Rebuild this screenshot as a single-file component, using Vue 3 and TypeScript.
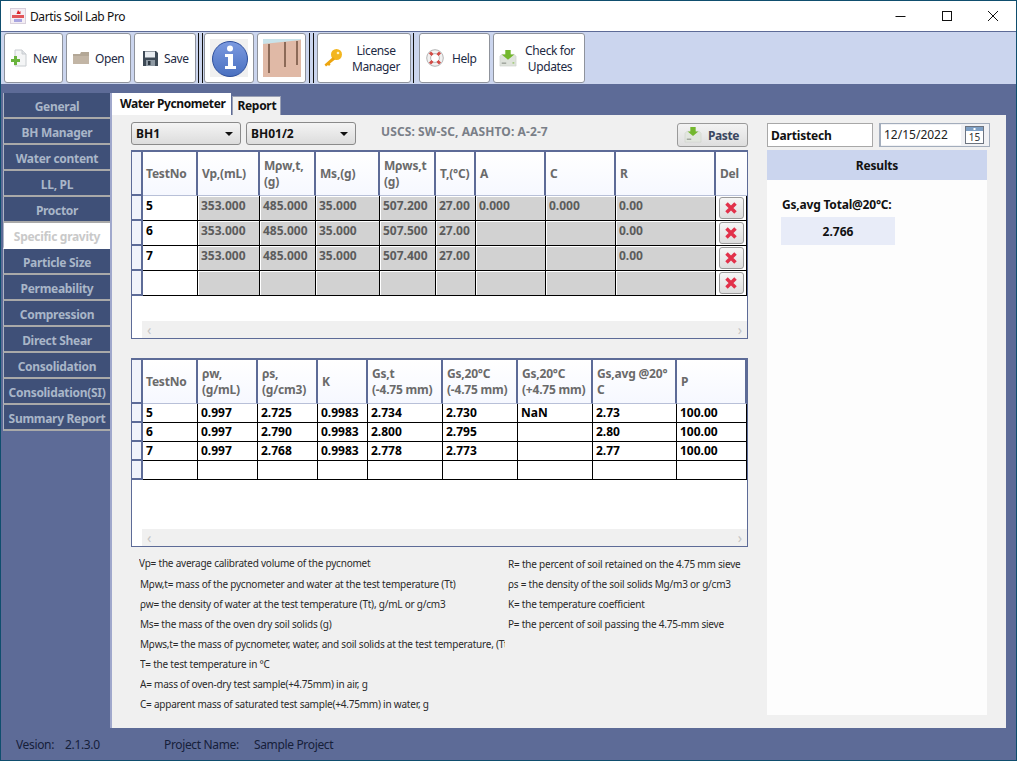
<script setup lang="ts">
const navItems = [
  'General', 'BH Manager', 'Water content', 'LL, PL', 'Proctor', 'Specific gravity', 'Particle Size',
  'Permeability', 'Compression', 'Direct Shear', 'Consolidation', 'Consolidation(SI)', 'Summary Report',
];

const inputCols = [55, 62, 56, 64, 56, 40, 70, 70, 100];
const inputHead = ['TestNo', 'Vp,(mL)', 'Mρw,t,\n(g)', 'Ms,(g)', 'Mρws,t\n(g)', 'T,(°C)', 'A', 'C', 'R'];
const inputRows = [
  ['5', '353.000', '485.000', '35.000', '507.200', '27.00', '0.000', '0.000', '0.00'],
  ['6', '353.000', '485.000', '35.000', '507.500', '27.00', '', '', '0.00'],
  ['7', '353.000', '485.000', '35.000', '507.400', '27.00', '', '', '0.00'],
  ['', '', '', '', '', '', '', '', ''],
];

const resultCols = [55, 60, 60, 50, 75, 75, 75, 84, 70];
const resultHead = ['TestNo', 'ρw,\n(g/mL)', 'ρs,\n(g/cm3)', 'K', 'Gs,t\n(-4.75 mm)', 'Gs,20°C\n(-4.75 mm)', 'Gs,20°C\n(+4.75 mm)', 'Gs,avg @20°\nC', 'P'];
const resultRows = [
  ['5', '0.997', '2.725', '0.9983', '2.734', '2.730', 'NaN', '2.73', '100.00'],
  ['6', '0.997', '2.790', '0.9983', '2.800', '2.795', '', '2.80', '100.00'],
  ['7', '0.997', '2.768', '0.9983', '2.778', '2.773', '', '2.77', '100.00'],
  ['', '', '', '', '', '', '', '', ''],
];

const notesLeft = [
  { text: 'Vp= the average calibrated volume of the pycnometer', width: 232 },
  { text: 'Mρw,t= mass of the pycnometer and water at the test temperature (Tt)', width: 365 },
  { text: 'ρw= the density of water at the test temperature (Tt), g/mL or g/cm3', width: 365 },
  { text: 'Ms= the mass of the oven dry soil solids (g)', width: 365 },
  { text: 'Mρws,t= the mass of pycnometer, water, and soil solids at the test temperature, (Tt)', width: 365 },
  { text: 'T= the test temperature in °C', width: 365 },
  { text: 'A= mass of oven-dry test sample(+4.75mm) in air, g', width: 365 },
  { text: 'C= apparent mass of saturated test sample(+4.75mm) in water, g', width: 365 },
];

const notesRight = [
  'R= the percent of soil retained on the 4.75 mm sieve',
  'ρs = the density of the soil solids Mg/m3 or g/cm3',
  'K= the temperature coefficient',
  'P= the percent of soil passing the 4.75-mm sieve',
];

const colTemplate = (cols: number[], extra = '') =>
  ({ gridTemplateColumns: `11px ${cols.map((c) => c + 'px').join(' ')} ${extra}` });
</script>

<template>
  <div class="window">
    <header class="titlebar">
      <svg class="app-icon" viewBox="0 0 16 16">
        <rect x="0.5" y="0.5" width="15" height="15" fill="#f4eef4" stroke="#d8d0dc" />
        <path d="M6.5 6 L8 2 L9.5 4 L10.5 3 L10.5 6 Z" fill="#d9262c" />
        <rect x="2" y="7" width="12" height="3" fill="#e2555a" />
        <rect x="4" y="11" width="8" height="3" fill="#a9a6e0" />
      </svg>
      <span class="app-title">Dartis Soil Lab Pro</span>
      <div class="win-controls">
        <svg viewBox="0 0 12 12"><path d="M0.5 6.5H10.5" stroke="#111" fill="none" /></svg>
        <svg viewBox="0 0 12 12"><rect x="1.5" y="1.5" width="9" height="9" stroke="#111" fill="none" /></svg>
        <svg viewBox="0 0 12 12"><path d="M1 1L11 11M11 1L1 11" stroke="#111" fill="none" /></svg>
      </div>
    </header>

    <div class="toolbar">
      <button class="tool new-btn">
        <svg viewBox="0 0 18 18" class="tool-icon">
          <path d="M5 1H12L16 5V17H5Z" fill="#f4f5f6" stroke="#c8ccd0" />
          <path d="M12 1V5H16" fill="#dfe2e6" stroke="#c8ccd0" />
          <path d="M4 7V10H1V13H4V16H7V13H10V10H7V7Z" fill="#69b33c" />
        </svg>
        <span>New</span>
      </button>
      <button class="tool open-btn">
        <svg viewBox="0 0 18 18" class="tool-icon">
          <path d="M1 5V15H17V3H9L8 5Z" fill="#b3a796" />
          <path d="M1 7H17V15H1Z" fill="#c2b5a5" />
        </svg>
        <span>Open</span>
      </button>
      <button class="tool save-btn">
        <svg viewBox="0 0 18 18" class="tool-icon">
          <path d="M2 2H15L17 4V17H2Z" fill="#3e4a56" />
          <rect x="4" y="2.500" width="10" height="6" fill="#e9edf1" />
          <rect x="5" y="11" width="9" height="6" fill="#8f9aa4" />
          <rect x="7" y="12" width="2.500" height="4" fill="#2e3842" />
        </svg>
        <span>Save</span>
      </button>
      <i class="tool-sep sep-a"></i>
      <button class="tool info-btn">
        <svg viewBox="0 0 38 38" class="pic-icon">
          <rect width="38" height="38" fill="#f0f0f0" />
          <defs>
            <linearGradient id="infoFill" x1="0" y1="0" x2="0" y2="1">
              <stop offset="0" stop-color="#7c9ae0" />
              <stop offset="1" stop-color="#4a70c0" />
            </linearGradient>
          </defs>
          <circle cx="20" cy="20" r="17.500" fill="url(#infoFill)" stroke="#2e4f9c" />
          <circle cx="20" cy="9.500" r="3" fill="#fff" />
          <path d="M15 15H23V27H26V30H15V27H18V18H15Z" fill="#fff" />
        </svg>
      </button>
      <button class="tool map-btn">
        <svg viewBox="0 0 38 38" class="pic-icon">
          <rect width="38" height="38" fill="#e0b9a6" />
          <path d="M0 0H38V1L0 5Z" fill="#c9e3ea" />
          <rect x="5" y="5" width="2" height="29" fill="#8c6a58" />
          <rect x="21" y="3" width="2" height="25" fill="#8c6a58" />
          <rect x="33" y="2" width="2" height="24" fill="#8c6a58" />
        </svg>
      </button>
      <i class="tool-sep sep-b"></i>
      <button class="tool license-btn">
        <svg viewBox="0 0 20 20" class="tool-icon key-icon">
          <circle cx="13.500" cy="6.500" r="5.500" fill="#f3b61f" />
          <circle cx="15" cy="5" r="1.300" fill="#fff4c8" />
          <path d="M10 9L1.500 16.500L3 18.500L5 17L6 18L7.500 16.500L7 15.500L12 11.500Z" fill="#eda50f" />
        </svg>
        <span class="two-line">License<br />Manager</span>
      </button>
      <i class="tool-sep single"></i>
      <button class="tool help-btn">
        <svg viewBox="0 0 18 18" class="tool-icon">
          <circle cx="9" cy="9" r="6.500" fill="none" stroke="#f1f1f1" stroke-width="4" />
          <circle cx="9" cy="9" r="8.300" fill="none" stroke="#8a8a8a" stroke-width="0.600" />
          <circle cx="9" cy="9" r="4.400" fill="none" stroke="#8a8a8a" stroke-width="0.600" />
          <path d="M4 3.500L6.500 6M14 3.500L11.500 6M4 14.500L6.500 12M14 14.500L11.500 12" stroke="#d24a45" stroke-width="3" />
        </svg>
        <span>Help</span>
      </button>
      <button class="tool update-btn">
        <svg viewBox="0 0 20 20" class="tool-icon">
          <path d="M1 8L3 6H17L19 8V19H1Z" fill="#dfe3dc" stroke="#c5cac2" stroke-width="0.500" />
          <path d="M7 1H13V6H17L10 12L3 6H7Z" fill="#74b82e" />
          <rect x="3" y="15" width="5" height="1.500" fill="#9aa097" />
          <rect x="15" y="15" width="2" height="1" fill="#74b82e" />
        </svg>
        <span class="two-line">Check for<br />Updates</span>
      </button>
    </div>

    <div class="workspace">
      <nav class="sidenav">
        <div v-for="item in navItems" :key="item" class="nav-item" :class="{ active: item === 'Specific gravity' }">
          {{ item }}
        </div>
      </nav>

      <main class="main">
        <div class="tabs">
          <div class="tab active">Water Pycnometer</div>
          <div class="tab">Report</div>
        </div>

        <div class="panel">
          <section class="left">
            <div class="filters">
              <div class="combo"><span>BH1</span><i class="caret"></i></div>
              <div class="combo"><span>BH01/2</span><i class="caret"></i></div>
              <span class="uscs">USCS: SW-SC, AASHTO: A-2-7</span>
              <button class="paste">
                <svg viewBox="0 0 20 18" class="paste-icon">
                  <path d="M1 7L3 5H17L19 7V17H1Z" fill="#e2e6df" stroke="#c5cac2" stroke-width="0.500" />
                  <path d="M7 0H13V5H16L10 10L4 5H7Z" fill="#74b82e" />
                  <rect x="3" y="13" width="5" height="1.500" fill="#9aa097" />
                </svg>
                <span>Paste</span>
              </button>
            </div>

            <div class="grid-box input-box">
              <div class="grid-row head" :style="colTemplate(inputCols, '1fr')">
                <div class="sel"></div>
                <div v-for="h in inputHead" :key="h" class="hcell">{{ h }}</div>
                <div class="hcell last">Del</div>
              </div>
              <div v-for="(row, r) in inputRows" :key="r" class="grid-row body" :style="colTemplate(inputCols, '1fr')">
                <div class="sel"></div>
                <div v-for="(c, i) in row" :key="i" class="cell" :class="{ locked: i > 0 }">{{ c }}</div>
                <div class="cell del-cell">
                  <button class="del">
                    <svg viewBox="0 0 12 12"><path d="M1.500 1.500L10.500 10.500M10.500 1.500L1.500 10.500" stroke="#e2314a" stroke-width="3.500" /></svg>
                  </button>
                </div>
              </div>
              <div class="hscroll"><span>‹</span><span>›</span></div>
            </div>

            <div class="grid-box result-box">
              <div class="grid-row head" :style="colTemplate(resultCols)">
                <div class="sel"></div>
                <div v-for="h in resultHead" :key="h" class="hcell">{{ h }}</div>
              </div>
              <div v-for="(row, r) in resultRows" :key="r" class="grid-row body short" :style="colTemplate(resultCols)">
                <div class="sel"></div>
                <div v-for="(c, i) in row" :key="i" class="cell">{{ c }}</div>
              </div>
              <div class="hscroll"><span>‹</span><span>›</span></div>
            </div>

            <div class="notes">
              <div class="notes-col">
                <div v-for="n in notesLeft" :key="n.text" class="note" :style="{ width: n.width + 'px' }">{{ n.text }}</div>
              </div>
              <div class="notes-col right-notes">
                <div v-for="n in notesRight" :key="n" class="note">{{ n }}</div>
              </div>
            </div>
          </section>

          <aside class="right">
            <div class="meta">
              <div class="company">Dartistech</div>
              <div class="date">
                <span class="date-text">12/15/2022</span>
                <svg viewBox="0 0 19 18" class="cal">
                  <rect x="0.500" y="0.500" width="18" height="17" fill="#fff" stroke="#6d7480" />
                  <rect x="1" y="1" width="17" height="4" fill="#7d9fc4" />
                  <rect x="8.500" y="2" width="2" height="2" fill="#fff" />
                  <text x="9.500" y="15" text-anchor="middle" class="cal-day">15</text>
                </svg>
              </div>
            </div>
            <div class="results">
              <div class="results-head">Results</div>
              <div class="results-label">Gs,avg Total@20°C:</div>
              <div class="results-value">2.766</div>
            </div>
          </aside>
        </div>
      </main>
    </div>

    <footer class="status">
      <span class="st-a">Vesion:</span>
      <span class="st-b">2.1.3.0</span>
      <span class="st-c">Project Name:</span>
      <span>Sample Project</span>
    </footer>
  </div>
</template>

<style>
html, body { margin: 0; padding: 0; background: #5d6b97; }
</style>

<style scoped>
* { box-sizing: border-box; }

.window {
  width: 1017px;
  height: 761px;
  display: flex;
  flex-direction: column;
  overflow: hidden;
  font-family: "Noto Sans", "Open Sans", sans-serif;
  font-size: 12px;
  color: #111;
  border: 1px solid #0f4e6e;
}

.titlebar {
  height: 30px;
  flex: none;
  display: flex;
  align-items: center;
  padding-left: 9px;
  background: #fff;
}

.app-icon { width: 16px; height: 16px; }

.app-title { margin-left: 4px; font-size: 12px; letter-spacing: -0.4px; }

.win-controls {
  margin-left: auto;
  display: flex;
  gap: 34px;
  padding-right: 17px;
}

.win-controls svg { width: 12px; height: 12px; }

.toolbar {
  height: 53px;
  flex: none;
  display: flex;
  align-items: center;
  padding-left: 3px;
  background: #cbd5ee;
  border-top: 1px solid #5d6b97;
}

.tool {
  height: 50px;
  display: flex;
  align-items: center;
  padding: 0;
  background: #fff;
  border: 1px solid #8f939c;
  border-radius: 3px;
  font: inherit;
  letter-spacing: -0.4px;
  color: #1e2a44;
  text-align: center;
}

.tool-icon { width: 18px; height: 18px; flex: none; }

.tool span { line-height: 16px; padding-top: 2px; }

.new-btn { width: 59px; padding-left: 5px; gap: 5px; }
.open-btn { width: 65px; margin-left: 3px; padding-left: 5px; gap: 5px; }
.save-btn { width: 62px; margin-left: 3px; padding-left: 6px; gap: 5px; }

.tool-sep {
  width: 5px;
  height: 50px;
  border-left: 1px solid #111;
  border-right: 1px solid #111;
}

.sep-a { margin: 0 1px 0 2px; }
.sep-b { margin: 0 3px; }
.tool-sep.single { width: 1px; border-right: 0; margin: 0 5px 0 2px; }

.info-btn { width: 50px; justify-content: center; }
.map-btn { width: 49px; margin-left: 3px; justify-content: center; }
.pic-icon { width: 38px; height: 38px; }

.license-btn { width: 94px; padding-left: 5px; gap: 2px; }
.key-icon { width: 20px; height: 20px; }
.help-btn { width: 71px; padding-left: 6px; gap: 8px; }
.update-btn { width: 92px; margin-left: 3px; padding-left: 5px; gap: 2px; }
.tool .two-line { flex: 1; padding-right: 3px; }

.workspace {
  flex: 1;
  min-height: 0;
  display: flex;
  background: #5d6b97;
  padding-left: 2px;
}

.sidenav {
  width: 107px;
  flex: none;
  padding-top: 9px;
}

.nav-item {
  height: 26px;
  display: flex;
  align-items: center;
  justify-content: center;
  padding-top: 2px;
  background: #3f5078;
  border-left: 1px solid #aeb4c4;
  border-bottom: 2px solid #a9a9a9;
  color: #a9b6c8;
  font-weight: 700;
  font-size: 12px;
  letter-spacing: -0.3px;
  white-space: nowrap;
}

.nav-item.active { background: #fff; color: #c9c9c9; border-bottom-color: #fff; }

.main {
  width: 896px;
  flex: none;
  margin-top: 9px;
  display: flex;
  flex-direction: column;
  height: 636px;
  border-left: 2px solid #a0a8cc;
}

.tabs { display: flex; align-items: flex-end; height: 22px; flex: none; }

.tab {
  height: 19px;
  margin-left: 1px;
  padding: 0 4px 1px;
  display: flex;
  align-items: center;
  background: #f0f0f0;
  border: 1px solid #9aa0b4;
  border-bottom: 0;
  font-weight: 700;
  font-size: 12px;
  letter-spacing: -0.3px;
}

.tab.active {
  height: 22px;
  margin-left: 0;
  padding: 0 6px 1px 8px;
  background: #fff;
  border: 0;
  letter-spacing: -0.4px;
}

.panel {
  flex: 1;
  display: flex;
  background: #f0f0f0;
  padding-left: 19px;
}

.left { width: 617px; flex: none; }

.filters {
  height: 35px;
  display: flex;
  align-items: flex-start;
  padding-top: 7px;
}

.combo {
  width: 110px;
  height: 23px;
  margin-right: 5px;
  display: flex;
  align-items: center;
  padding: 0 4px;
  background: linear-gradient(#f4f4f4, #dcdcdc);
  border: 1px solid #8a8a8a;
  border-radius: 3px;
  font-weight: 700;
  font-size: 12px;
}

.caret {
  margin-left: auto;
  margin-right: 3px;
  border: 4px solid transparent;
  border-top: 4px solid #111;
  border-bottom: 0;
}

.uscs {
  margin-left: 20px;
  margin-top: 1px;
  font-weight: 700;
  font-size: 12px;
  letter-spacing: 0.1px;
  color: #7a7f88;
}

.paste {
  margin-left: auto;
  margin-top: 1px;
  width: 71px;
  height: 24px;
  padding: 0 0 0 6px;
  display: flex;
  align-items: center;
  gap: 6px;
  background: linear-gradient(#f3f3f3, #dedede);
  border: 1px solid #9a9a9a;
  border-radius: 3px;
  font: inherit;
  font-weight: 700;
  letter-spacing: -0.4px;
  color: #3a4660;
}

.paste-icon { width: 18px; height: 16px; }

.grid-box {
  position: relative;
  background: #fff;
  border: 1px solid #5d6b97;
}

.input-box { height: 189px; border-top-width: 2px; }
.result-box { height: 189px; margin-top: 19px; border-top-width: 2px; }

.grid-row { display: grid; }

.head { height: 44px; }

.body { height: 25px; }
.body.short { height: 19px; }

.sel {
  background: #f1f3fa;
  border-right: 2px solid #5d6b97;
  border-bottom: 2px solid #5d6b97;
}

.hcell {
  display: flex;
  align-items: center;
  padding-left: 4px;
  background: linear-gradient(#fff, #f6f8ff);
  border-right: 2px solid #5d6b97;
  border-bottom: 1px solid #b8c0d8;
  color: #6a6a6a;
  font-weight: 700;
  font-size: 12px;
  line-height: 16px;
  letter-spacing: -0.2px;
  white-space: pre-line;
}

.hcell:nth-child(2) { padding-left: 3px; }

.hcell.last { border-right: 0; }

.cell {
  padding: 2px 0 0 3px;
  background: #fff;
  border-right: 1px solid #000;
  border-bottom: 1px solid #000;
  color: #000;
  font-weight: 700;
  font-size: 12px;
  line-height: 16px;
  overflow: hidden;
}

.short .cell { padding-top: 1px; }

.cell.locked {
  background: #d2d2d2;
  box-shadow: inset 1px 1px 0 #fff;
  color: #5c5c5c;
}

.del-cell {
  display: flex;
  align-items: center;
  justify-content: center;
  padding: 0;
}

.del {
  width: 25px;
  height: 22px;
  padding: 0;
  display: flex;
  align-items: center;
  justify-content: center;
  background: linear-gradient(#f6f6f6, #dedede);
  border: 1px solid #9a9a9a;
  border-radius: 3px;
}

.del svg { width: 12px; height: 12px; }

.hscroll {
  position: absolute;
  left: 10px;
  right: 0;
  bottom: 0;
  height: 17px;
  padding: 0 5px;
  display: flex;
  justify-content: space-between;
  align-items: center;
  background: #f0f0f0;
  color: #c4c4c4;
  font-size: 14px;
  line-height: 14px;
}

.notes {
  display: flex;
  padding-top: 6px;
  font-size: 10px;
  color: #2a2a2a;
}

.notes-col { width: 369px; padding-left: 9px; }
.right-notes { width: 248px; padding-left: 8px; padding-top: 1px; }

.note {
  height: 20px;
  line-height: 20px;
  letter-spacing: -0.22px;
  white-space: nowrap;
  overflow: hidden;
}

.notes-col:first-child .note:first-child { height: 21px; margin-left: -1px; }

.right { width: 223px; margin-left: 19px; flex: none; }

.meta { display: flex; padding-top: 8px; height: 35px; }

.company {
  width: 106px;
  height: 24px;
  display: flex;
  align-items: center;
  padding-left: 3px;
  background: #fff;
  border: 1px solid #a8a8a8;
  font-weight: 700;
  font-size: 12px;
  letter-spacing: -0.2px;
}

.date {
  width: 111px;
  height: 24px;
  margin-left: 6px;
  display: flex;
  align-items: center;
  background: #f0f1f4;
  border: 2px solid #a3adbc;
  border-width: 1px 1px 1px 2px;
}

.date-text {
  width: 80px;
  height: 20px;
  padding-left: 3px;
  line-height: 20px;
  background: #fff;
  font-size: 12px;
  color: #222;
}

.cal { width: 19px; height: 18px; margin-left: 4px; }

.cal-day { font-size: 10px; font-family: "Noto Sans", sans-serif; fill: #333; }

.results {
  width: 220px;
  height: 565px;
  background: #fdfdfd;
}

.results-head {
  height: 30px;
  display: flex;
  align-items: center;
  justify-content: center;
  background: #cbd5ee;
  font-weight: 700;
  font-size: 12px;
  letter-spacing: -0.2px;
}

.results-label {
  margin: 17px 0 0 15px;
  font-weight: 700;
  font-size: 12px;
  letter-spacing: -0.2px;
  line-height: 16px;
}

.results-value {
  width: 114px;
  height: 28px;
  margin: 4px 0 0 14px;
  display: flex;
  align-items: center;
  justify-content: center;
  background: #e8ecf8;
  font-weight: 700;
  font-size: 12px;
}

.status {
  height: 32px;
  flex: none;
  display: flex;
  align-items: center;
  padding: 0 0 0 15px;
  background: #5d6b97;
  color: #16203a;
  font-size: 12px;
  letter-spacing: -0.35px;
}

.st-a { width: 49px; }
.st-b { width: 99px; }
.st-c { width: 90px; }
</style>
